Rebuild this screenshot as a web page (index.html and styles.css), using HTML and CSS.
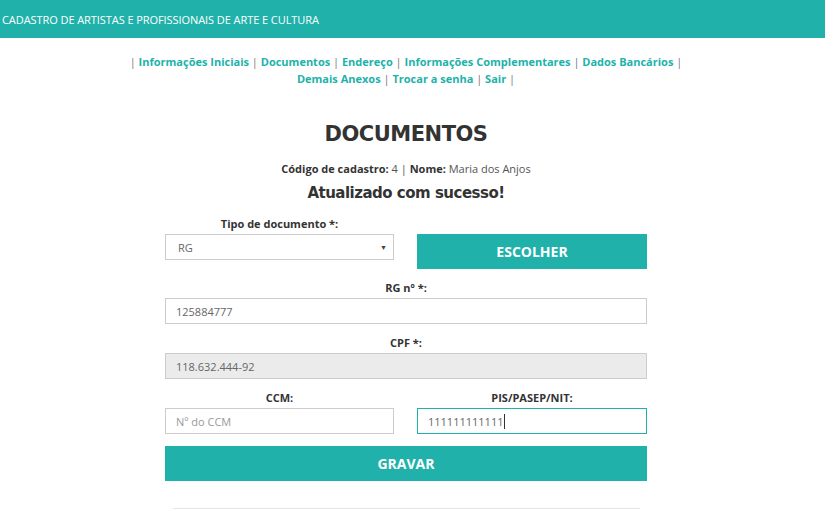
FILE: index.html
```html
<!DOCTYPE html>
<html lang="pt-BR">
<head>
<meta charset="utf-8">
<title>Documentos</title>
<link rel="stylesheet" href="styles.css">
</head>
<body>
<header class="topbar">
  <span class="topbar-title">CADASTRO DE ARTISTAS E PROFISSIONAIS DE ARTE E CULTURA</span>
</header>
<div class="page">
  <nav class="menu">
    <span class="sep">|</span> <a href="#">Informações Iniciais</a> <span class="sep">|</span> <a href="#">Documentos</a> <span class="sep">|</span> <a href="#">Endereço</a> <span class="sep">|</span> <a href="#">Informações Complementares</a> <span class="sep">|</span> <a href="#">Dados Bancários</a> <span class="sep">|</span><br>
    <a href="#">Demais Anexos</a> <span class="sep">|</span> <a href="#">Trocar a senha</a> <span class="sep">|</span> <a href="#">Sair</a> <span class="sep">|</span>
  </nav>
  <h1 class="title">DOCUMENTOS</h1>
  <p class="info"><b>Código de cadastro:</b> 4 | <b>Nome:</b> Maria dos Anjos</p>
  <h2 class="success">Atualizado com sucesso!</h2>
  <form class="form">
    <div class="row two">
      <div class="field">
        <label class="label">Tipo de documento *:</label>
        <div class="select"><span>RG</span><span class="arrow">▼</span></div>
      </div>
      <div class="field button-field">
        <button type="button" class="btn choose">ESCOLHER</button>
      </div>
    </div>
    <div class="row">
      <div class="field">
        <label class="label">RG nº *:</label>
        <div class="input">125884777</div>
      </div>
    </div>
    <div class="row">
      <div class="field">
        <label class="label">CPF *:</label>
        <div class="input disabled">118.632.444-92</div>
      </div>
    </div>
    <div class="row two">
      <div class="field">
        <label class="label">CCM:</label>
        <div class="input placeholder">Nº do CCM</div>
      </div>
      <div class="field">
        <label class="label">PIS/PASEP/NIT:</label>
        <div class="input focus">111111111111<span class="caret"></span></div>
      </div>
    </div>
    <button type="button" class="btn save">GRAVAR</button>
  </form>
  <hr class="divider">
</div>
</body>
</html>
```
FILE: styles.css
```css
* { box-sizing: border-box; }
html, body { margin: 0; padding: 0; background: #fff; }
body { font-family: "Open Sans", "Liberation Sans", sans-serif; color: #333; overflow: hidden; }

.topbar {
  height: 38px;
  background: #20b2aa;
  display: flex;
  align-items: center;
  padding-left: 2px;
}
.topbar-title { color: #fff; font-size: 11px; letter-spacing: -0.07px; }

.page { width: 812px; display: flex; flex-direction: column; align-items: center; }

.menu {
  margin-top: 15px;
  text-align: center;
  font-size: 11px;
  font-weight: 700;
  line-height: 17px;
}
.menu a { color: #20b2aa; text-decoration: none; }
.menu .sep { color: #777; font-weight: 400; }

.title {
  margin: 34px 0 0;
  font-family: "DejaVu Sans", sans-serif;
  font-weight: 700;
  font-size: 21px;
  letter-spacing: -0.5px;
  line-height: 26px;
  color: #333;
}
.info { margin: 14px 0 0; font-size: 11px; line-height: 16px; color: #555; }
.info b { color: #333; }
.success {
  margin: 5px 0 0;
  font-family: "DejaVu Sans", sans-serif;
  font-weight: 700;
  font-size: 15px;
  letter-spacing: -0.5px;
  line-height: 22px;
  color: #333;
}

.form { width: 482px; margin-top: 12px; display: flex; flex-direction: column; }
.row { display: grid; grid-template-columns: 1fr; column-gap: 23px; margin-bottom: 11px; align-items: start; }
.row.two { grid-template-columns: 229px 230px; }
.field { display: flex; flex-direction: column; }
.button-field { padding-top: 18px; }
.label { text-align: center; font-size: 11px; font-weight: 700; color: #333; line-height: 16px; margin-bottom: 2px; }

.select, .input {
  height: 26px;
  border: 1px solid #ccc;
  font-size: 11px;
  color: #666;
  display: flex;
  align-items: center;
  padding: 0 10px;
  background: #fff;
}
.select { justify-content: space-between; padding: 0 6px 0 12px; }
.select .arrow { font-size: 7px; color: #444; }
.input.disabled { background: #ebebeb; }
.input.placeholder { color: #999; }
.input.focus { border-color: #20b2aa; }
.caret { display: inline-block; width: 1px; height: 15px; background: #333; margin-left: 1px; }

.btn {
  border: 0;
  background: #20b2aa;
  color: #fff;
  font-family: "Open Sans", "Liberation Sans", sans-serif;
  font-weight: 700;
  font-size: 14px;
  height: 35px;
  width: 100%;
  padding: 0;
}
.save { margin-top: 1px; height: 35px; }
.divider { width: 467px; border: 0; border-top: 1px solid #e5e5e5; margin: 27px 0 0; }
```
